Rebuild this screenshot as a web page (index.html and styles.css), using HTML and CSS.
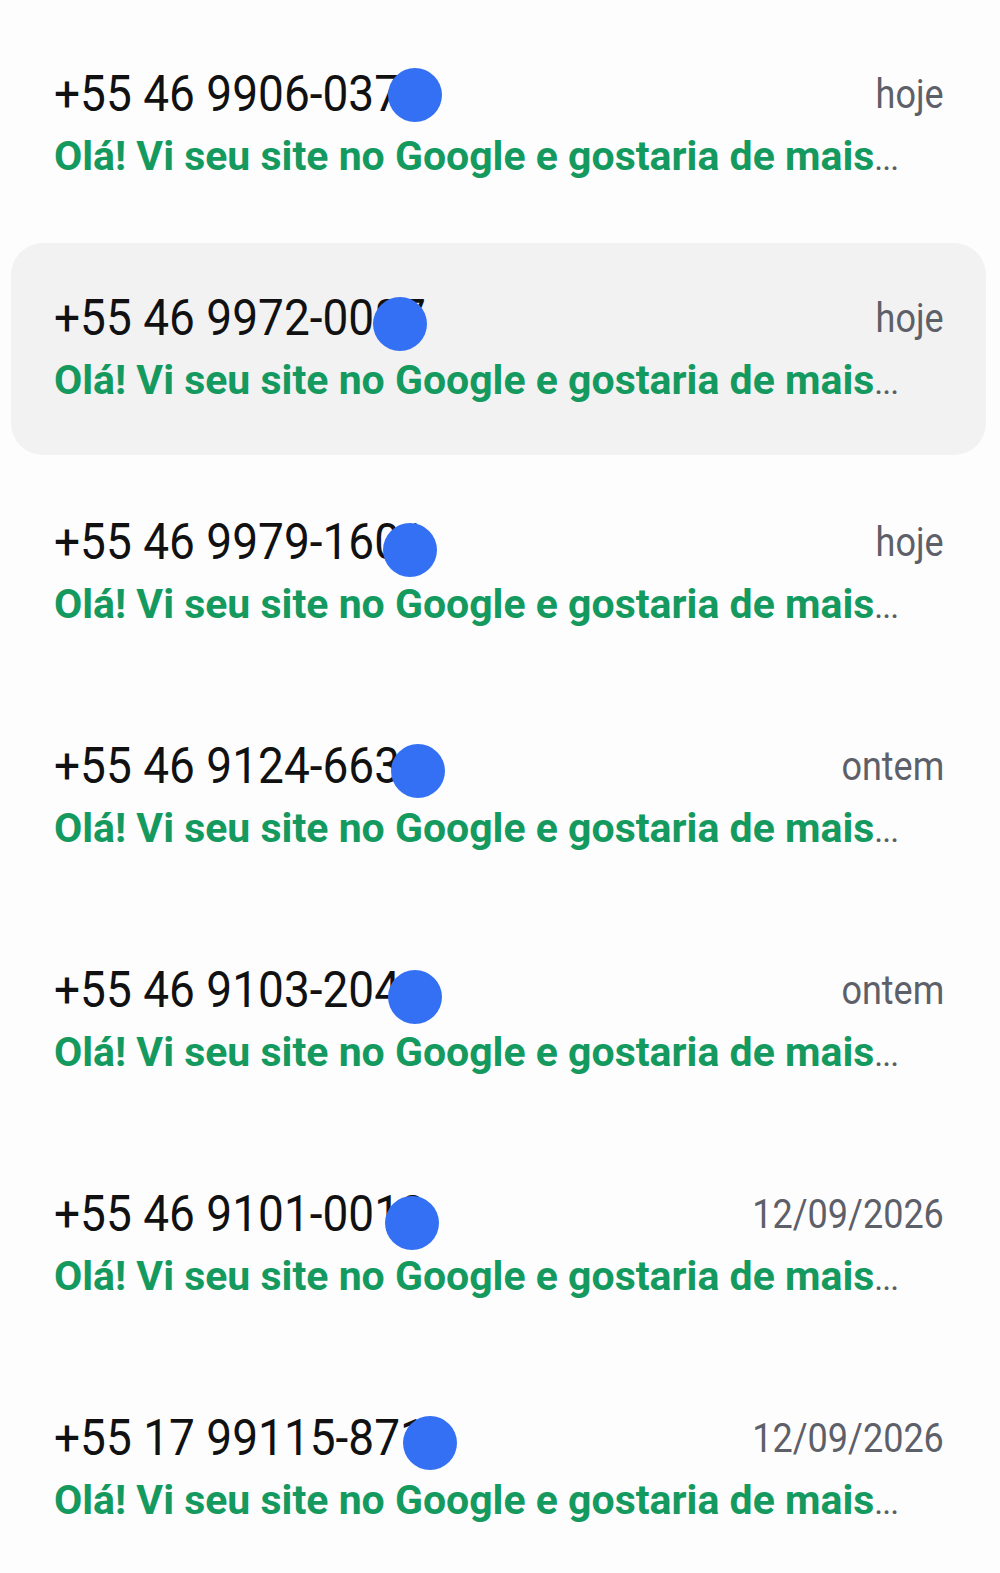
FILE: index.html
```html
<!DOCTYPE html>
<html lang="pt-BR">
<head>
<meta charset="utf-8">
<title>Conversas</title>
<link rel="stylesheet" href="styles.css">
</head>
<body>
<div class="list">
  <div class="row">
    <div class="top"><span class="num">+55 46 9906-0371</span><span class="date">hoje</span></div>
    <div class="msg"><span class="preview">Olá! Vi seu site no Google e gostaria de mais</span><span class="ell">...</span></div>
    <span class="dot" style="left:377px;top:49px"></span>
  </div>
  <div class="row active">
    <div class="top"><span class="num">+55 46 9972-0087</span><span class="date">hoje</span></div>
    <div class="msg"><span class="preview">Olá! Vi seu site no Google e gostaria de mais</span><span class="ell">...</span></div>
    <span class="dot" style="left:362px;top:54px"></span>
  </div>
  <div class="row">
    <div class="top"><span class="num">+55 46 9979-1601</span><span class="date">hoje</span></div>
    <div class="msg"><span class="preview">Olá! Vi seu site no Google e gostaria de mais</span><span class="ell">...</span></div>
    <span class="dot" style="left:372px;top:56px"></span>
  </div>
  <div class="row">
    <div class="top"><span class="num">+55 46 9124-6633</span><span class="date">ontem</span></div>
    <div class="msg"><span class="preview">Olá! Vi seu site no Google e gostaria de mais</span><span class="ell">...</span></div>
    <span class="dot" style="left:380px;top:53px"></span>
  </div>
  <div class="row">
    <div class="top"><span class="num">+55 46 9103-2044</span><span class="date">ontem</span></div>
    <div class="msg"><span class="preview">Olá! Vi seu site no Google e gostaria de mais</span><span class="ell">...</span></div>
    <span class="dot" style="left:377px;top:55px"></span>
  </div>
  <div class="row">
    <div class="top"><span class="num">+55 46 9101-0012</span><span class="date">12/09/2026</span></div>
    <div class="msg"><span class="preview">Olá! Vi seu site no Google e gostaria de mais</span><span class="ell">...</span></div>
    <span class="dot" style="left:374px;top:57px"></span>
  </div>
  <div class="row">
    <div class="top"><span class="num">+55 17 99115-8711</span><span class="date">12/09/2026</span></div>
    <div class="msg"><span class="preview">Olá! Vi seu site no Google e gostaria de mais</span><span class="ell">...</span></div>
    <span class="dot" style="left:392px;top:53px"></span>
  </div>
</div>
</body>
</html>
```
FILE: styles.css
```css
html, body {
  margin: 0;
  padding: 0;
  background: #fdfdfd;
}
body {
  font-family: Roboto, "Liberation Sans", sans-serif;
  width: 1000px;
  height: 1573px;
  overflow: hidden;
}
.list {
  display: flex;
  flex-direction: column;
  gap: 12px;
  padding: 19px 14px 0 11px;
}
.row {
  position: relative;
  height: 212px;
  box-sizing: border-box;
  padding: 44px 42px 0 43px;
  border-radius: 32px;
}
.row.active {
  background: #f2f2f3;
}
.top {
  display: flex;
  justify-content: space-between;
  align-items: baseline;
  height: 62px;
}
.num {
  display: inline-block;
  font-size: 50px;
  line-height: 62px;
  color: #111;
  transform: scaleX(0.92);
  transform-origin: left center;
  white-space: nowrap;
}
.date {
  display: inline-block;
  font-size: 40px;
  line-height: 62px;
  color: #5d6068;
  transform: scaleX(0.9) translateY(-3px);
  transform-origin: right center;
  white-space: nowrap;
}
.msg {
  margin-top: 1px;
  font-size: 41px;
  line-height: 60px;
  white-space: nowrap;
}
.preview {
  font-weight: 700;
  color: #14995f;
}
.ell {
  color: #5a5d63;
  font-weight: 400;
  font-size: 34px;
  letter-spacing: -1px;
}
.dot {
  position: absolute;
  width: 54px;
  height: 54px;
  border-radius: 50%;
  background: #3470f4;
}
```
